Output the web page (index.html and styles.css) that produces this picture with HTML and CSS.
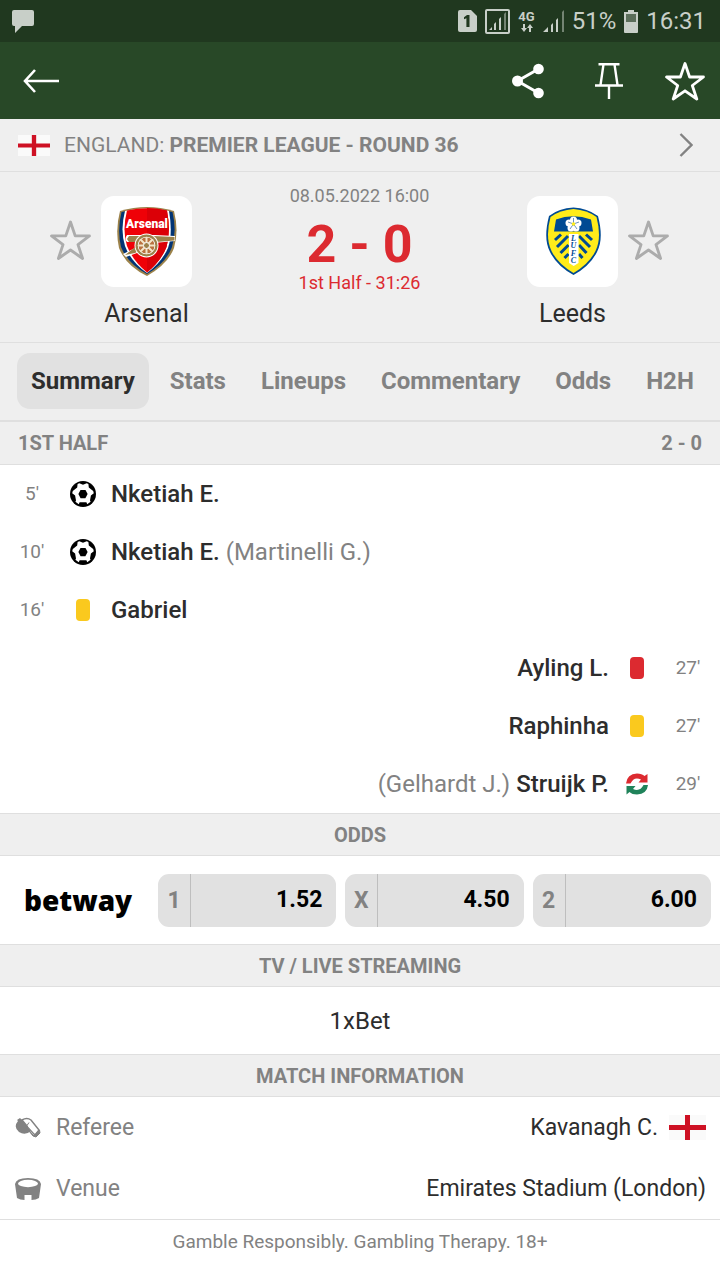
FILE: index.html
```html
<!DOCTYPE html>
<html lang="en">
<head>
  <meta charset="UTF-8">
  <meta name="viewport" content="width=device-width, initial-scale=1.0">
  <title>Arsenal - Leeds</title>
  <link rel="stylesheet" href="styles.css">
</head>
<body>
  <svg class="defs" aria-hidden="true">
    <symbol id="star" viewBox="0 0 40 40">
      <path d="M20 2.5 L24.6 16 H38.5 L27.3 24.5 L31.8 38 L20 29.8 L8.2 38 L12.7 24.5 L1.5 16 H15.4 Z" fill="none" stroke="currentColor" stroke-width="2.8" stroke-linejoin="round"/>
    </symbol>
    <symbol id="england" viewBox="0 0 37 25" preserveAspectRatio="none">
      <path d="M0 0H37V25H0Z" fill="#fafafa"/>
      <path d="M16 0H21V25H16ZM0 10H37V15H0Z" fill="#ce1124"/>
    </symbol>
    <symbol id="ball" viewBox="0 0 26 26">
      <circle cx="13" cy="13" r="13" fill="#000"/>
      <path d="M13 3.8 L16.7 2.3 L18.4 3 L18.8 6.6 L23.2 9.9 L23.8 12.2 L20.9 14.6 L20 19.4 L20.6 20.8 L17.2 23.2 L16.4 21.2 H9.6 L8.8 23.2 L5.4 20.8 L6 19.4 L5.1 14.6 L2.2 12.2 L2.8 9.9 L7.2 6.6 L7.6 3 L9.3 2.3 Z" fill="#fff"/>
      <path d="M10.5 9 H15.5 L17.6 13 L15.4 17.2 H10.6 L8.4 13 Z" fill="#000"/>
    </symbol>
  </svg>

  <div class="status-bar">
    <svg class="status-chat" viewBox="0 0 22 23"><path d="M2 0H20Q22 0 22 2V14Q22 16 20 16H10L3 23V16H2Q0 16 0 14V2Q0 0 2 0Z" fill="currentColor"/></svg>
    <div class="status-right">
      <svg width="19" height="22" viewBox="0 0 19 22"><path d="M2 0H13L19 6V20Q19 22 17 22H2Q0 22 0 20V2Q0 0 2 0Z" fill="currentColor"/><path d="M6 7.2L9 5H11.5V17H8.4V8.3L6 9.2Z" fill="#20381f"/></svg>
      <svg width="25" height="25" viewBox="0 0 25 25"><rect x="1" y="1" width="23" height="23" rx="1" fill="none" stroke="currentColor" stroke-width="2"/><path d="M4 21L7 18V21ZM9 15L11 13V21H9ZM14 10L16 8V21H14Z" fill="currentColor"/><path d="M19 5L21 3V21H19Z" fill="currentColor" opacity=".5"/></svg>
      <span class="network">
        <span>4G</span>
        <svg width="12" height="9" viewBox="0 0 12 9"><path d="M2 0H4V4H6L3 8L0 4H2ZM8 8V4H6L9 0L12 4H10V8Z" fill="currentColor"/></svg>
      </span>
      <svg width="21" height="22" viewBox="0 0 21 22"><path d="M0 22L5 17V22ZM8 15L10 13V22H8ZM13 10L15 8V22H13Z" fill="currentColor"/><path d="M19 2L21 0V22H19Z" fill="currentColor" opacity=".5"/></svg>
      <span class="status-text">51%</span>
      <svg width="14" height="23" viewBox="0 0 14 23"><path d="M4 0H10V2H14V13H0V2H4Z" fill="currentColor"/><path d="M2 4H12V12H2Z" fill="#5b6e5a"/><path d="M0 12H14V22Q14 23 13 23H1Q0 23 0 22Z" fill="currentColor"/></svg>
      <span class="status-text">16:31</span>
    </div>
  </div>

  <header class="toolbar">
    <button class="icon-button" aria-label="Back">
      <svg width="38" height="26" viewBox="0 0 38 26"><path d="M13 2L3 13L13 24M3 13H37" fill="none" stroke="#fff" stroke-width="2.6"/></svg>
    </button>
    <div class="toolbar-actions">
      <button class="icon-button" aria-label="Share">
        <svg width="32" height="36" viewBox="0 0 32 36"><path d="M26.500 6L5.500 18L26.500 30" fill="none" stroke="#fff" stroke-width="3"/><circle cx="26.500" cy="6" r="5.300" fill="#fff"/><circle cx="5.500" cy="18" r="5.500" fill="#fff"/><circle cx="26.500" cy="30" r="5.300" fill="#fff"/></svg>
      </button>
      <button class="icon-button" aria-label="Pin">
        <svg width="28" height="36" viewBox="0 0 28 36"><path d="M3.500 1.300H24.500M8.500 1.300L5.500 22M19.500 1.300L22.500 22M0 22.500H28M14 22.500V36" fill="none" stroke="#fff" stroke-width="2.400"/></svg>
      </button>
      <button class="icon-button" aria-label="Add to favourites">
        <svg width="40" height="40"><use href="#star"/></svg>
      </button>
    </div>
  </header>

  <a class="league" href="#">
    <svg class="flag-small"><use href="#england"/></svg>
    <span class="league-name">ENGLAND: <b>PREMIER LEAGUE - ROUND 36</b></span>
    <svg width="14" height="24" viewBox="0 0 14 24"><path d="M1.500 1L12.500 12L1.500 23" fill="none" stroke="#828282" stroke-width="2.400"/></svg>
  </a>

  <section class="match">
    <button class="favourite" aria-label="Follow Arsenal"><svg width="41" height="42"><use href="#star"/></svg></button>
    <div class="team">
      <svg class="crest" viewBox="0 0 91 91">
        <path d="M19 15Q46 7 73 15Q78 35 73 52Q67 68 46 80Q25 70 18 52Q14 34 19 15Z" fill="#9c824a"/>
        <path d="M20.500 16Q46 9.500 71.500 16Q76 35 71 51Q65 67 46 78Q27 68 20 51Q16 34 20.500 16Z" fill="#023474"/>
        <path d="M24 15Q46 9.500 68 15Q72 37 67 52Q61 66 46 77Q30 66 24 50Q19 34 24 15Z" fill="#fff"/>
        <path d="M26 14.500Q46 10 66 14.500Q70 36 65.500 51Q60 65 46 76.500Q32 65 26 50Q21 34 26 14.500Z" fill="#ef0107"/>
        <path d="M46 12Q57 12 66 14.500Q70 36 65.500 51Q60 65 46 76.500Z" fill="#db0007"/>
        <path d="M26 39Q23 43 26 46L38 46L34 52L22 58L25 61L36 57L53 47L74 45V40L54 39L28 39Z" fill="#fff"/>
        <path d="M28 40H53L73.500 41V44.500L55 46H28L26 43ZM24 59L37 49L43 52L34 57Z" fill="#9c824a"/>
        <circle cx="45.500" cy="49.500" r="12" fill="#fff"/>
        <circle cx="45.500" cy="49.500" r="11" fill="#9c824a"/>
        <circle cx="45.500" cy="49.500" r="8.800" fill="#fff"/>
        <circle cx="45.500" cy="49.500" r="8" fill="#b9713f"/>
        <path d="M45.500 41V58M37 49.500H54M39.500 43.500L51.500 55.500M51.500 43.500L39.500 55.500" stroke="#f2e7c8" stroke-width="2"/>
        <circle cx="45.500" cy="49.500" r="3" fill="#9c824a" stroke="#fff"/>
        <text class="crest-name" x="46" y="32" text-anchor="middle">Arsenal</text>
      </svg>
      <span class="team-name">Arsenal</span>
    </div>
    <div class="result">
      <span class="date">08.05.2022 16:00</span>
      <strong class="score">2 - 0</strong>
      <span class="stage">1st Half - 31:26</span>
    </div>
    <div class="team">
      <svg class="crest" viewBox="0 0 91 91">
        <path d="M46.500 11.500Q60 12 71 20Q77 43 70 56Q63 70 46.500 79Q30 70 23 56Q16 43 22 20Q32 12 46.500 11.500Z" fill="#004a93"/>
        <path d="M46.500 13Q60 14 69.500 21Q75 42 68.500 55Q62 68 46.500 77Q31 68 24.500 55Q18 42 23.500 21Q33 14 46.500 13Z" fill="#ffec1a"/>
        <path d="M29 23.500Q46 17 64 23.500L66 35.500H27Z" fill="#004a93"/>
        <path d="M34 38.500L28 44M41 40L30 51M41.500 49L33.500 57M41.500 58L37.500 62M59 38.500L65 44M52 40L63 51M52 49L59.500 57M52 58L55.500 62" fill="none" stroke="#004a93" stroke-width="3"/>
        <path d="M42 38H51.500V67L46.700 70L42 67Z" fill="#fff"/>
        <g fill="#fff"><circle cx="46.500" cy="24" r="3.500"/><circle cx="51" cy="27" r="3.500"/><circle cx="49" cy="32" r="3.500"/><circle cx="44" cy="32" r="3.500"/><circle cx="42" cy="27" r="3.500"/></g>
        <path d="M46.500 22V28L52 26M46.500 28L50 33M46.500 28L43 33M46.500 28L41 26" fill="none" stroke="#6b94bd"/>
        <circle cx="46.500" cy="28" r="1.800" fill="#ffec1a"/>
        <text class="crest-letters" text-anchor="middle"><tspan x="46.500" y="45">L</tspan><tspan x="46.500" y="52">U</tspan><tspan x="46.500" y="60">F</tspan><tspan x="46.500" y="67">C</tspan></text>
      </svg>
      <span class="team-name">Leeds</span>
    </div>
    <button class="favourite" aria-label="Follow Leeds"><svg width="41" height="42"><use href="#star"/></svg></button>
  </section>

  <nav class="tabs">
    <a class="tab active" href="#">Summary</a>
    <a class="tab" href="#">Stats</a>
    <a class="tab" href="#">Lineups</a>
    <a class="tab" href="#">Commentary</a>
    <a class="tab" href="#">Odds</a>
    <a class="tab" href="#">H2H</a>
  </nav>

  <h2 class="section-title half"><span>1ST HALF</span><span>2 - 0</span></h2>
  <ul class="events">
    <li class="event">
      <span class="minute">5'</span>
      <svg class="event-icon"><use href="#ball"/></svg>
      <span class="player">Nketiah E.</span>
    </li>
    <li class="event">
      <span class="minute">10'</span>
      <svg class="event-icon"><use href="#ball"/></svg>
      <span class="player">Nketiah E. <span class="other">(Martinelli G.)</span></span>
    </li>
    <li class="event">
      <span class="minute">16'</span>
      <span class="event-icon"><i class="card yellow"></i></span>
      <span class="player">Gabriel</span>
    </li>
    <li class="event away">
      <span class="minute">27'</span>
      <span class="event-icon"><i class="card red"></i></span>
      <span class="player">Ayling L.</span>
    </li>
    <li class="event away">
      <span class="minute">27'</span>
      <span class="event-icon"><i class="card yellow"></i></span>
      <span class="player">Raphinha</span>
    </li>
    <li class="event away">
      <span class="minute">29'</span>
      <svg class="event-icon" viewBox="0 0 26 26">
        <path d="M2 12.500Q3 3 13 2.500Q18 2.500 20.500 5L23.500 3V11.500H14.500L17 8.500Q10 5 6.500 12.500Z" fill="#dc2a30"/>
        <path d="M24 14Q23 23 13 23.500Q8 23.500 5.500 21L2.500 23.500V15H11.500L9 18Q16 21 19.500 14Z" fill="#20835a"/>
      </svg>
      <span class="player"><span class="other">(Gelhardt J.)</span> Struijk P.</span>
    </li>
  </ul>

  <h2 class="section-title">ODDS</h2>
  <div class="odds">
    <a class="bookmaker" href="#">betway</a>
    <button class="odd"><span class="odd-label">1</span><span class="odd-value">1.52</span></button>
    <button class="odd"><span class="odd-label">X</span><span class="odd-value">4.50</span></button>
    <button class="odd"><span class="odd-label">2</span><span class="odd-value">6.00</span></button>
  </div>

  <h2 class="section-title">TV / LIVE STREAMING</h2>
  <a class="stream" href="#">1xBet</a>

  <h2 class="section-title">MATCH INFORMATION</h2>
  <dl class="info">
    <div class="info-row">
      <svg width="26" height="22" viewBox="0 0 26 22">
        <path d="M3 4L2 3L5 1L7 3Q12 2 15 6L12 9L16 14Q10 19 4 15Q-2 10 3 4Z" fill="#828282"/>
        <path d="M7 3Q12 0 16 3L24 13L20 18L12 9Z" fill="#fff" stroke="#828282" stroke-width="1.500"/>
        <path d="M12 8.500L14 5.500M10 9L19 19L24.500 13L25 16L21 20L18 19Z" fill="#828282" stroke="#828282"/>
        <path d="M15.500 6.500L22 13.500L19.500 16.500L13 9.500Z" fill="#fff"/>
      </svg>
      <dt>Referee</dt>
      <dd>Kavanagh C. <svg class="flag"><use href="#england"/></svg></dd>
    </div>
    <div class="info-row">
      <svg width="26" height="24" viewBox="0 0 26 24">
        <path d="M0 7Q1 1 13 1Q25 1 26 7L24 21Q21 23 16.500 23V18H9.500V23Q5 23 2 21Z" fill="#828282"/>
        <ellipse cx="13" cy="6.500" rx="10" ry="3.700" fill="#fff"/>
      </svg>
      <dt>Venue</dt>
      <dd>Emirates Stadium (London)</dd>
    </div>
  </dl>

  <footer>Gamble Responsibly. Gambling Therapy. 18+</footer>
</body>
</html>
```

FILE: styles.css
```css
* {
  box-sizing: border-box;
}

body {
  margin: 0;
  font-family: Roboto, 'Liberation Sans', Arial, sans-serif;
  font-size: 24px;
  line-height: 28px;
  color: #2d2d2d;
  background: #ffffff;
}

a {
  color: inherit;
  text-decoration: none;
}

button {
  font: inherit;
  color: inherit;
  background: none;
  border: none;
  padding: 0;
  cursor: pointer;
}

svg {
  display: block;
  flex-shrink: 0;
}

.defs {
  display: none;
}

.status-bar {
  display: flex;
  justify-content: space-between;
  align-items: center;
  height: 42px;
  padding: 0 14px 0 12px;
  background: #20381f;
  color: #c8cfc8;
}

.status-chat {
  width: 22px;
  height: 23px;
}

.status-right {
  display: flex;
  align-items: center;
  gap: 8px;
}

.status-text {
  font-size: 24px;
}

.network {
  display: flex;
  flex-direction: column;
  align-items: center;
  gap: 1px;
  font-size: 13px;
  line-height: 13px;
  font-weight: 700;
}

.toolbar {
  display: flex;
  justify-content: space-between;
  align-items: center;
  height: 77px;
  padding: 0 15px 0 22px;
  background: #284827;
}

.toolbar-actions {
  display: flex;
  align-items: center;
  gap: 51px;
}

.toolbar-actions .icon-button:last-child {
  margin-left: -9px;
}

.icon-button {
  color: #ffffff;
}

.league {
  display: flex;
  align-items: center;
  gap: 14px;
  height: 53px;
  padding: 0 27px 0 18px;
  background: #efefef;
  border-bottom: 1px solid #dfdfdf;
  color: #828282;
  font-size: 21px;
}

.league-name {
  flex: 1;
}

.flag-small {
  width: 32px;
  height: 21px;
}

.flag {
  width: 37px;
  height: 25px;
}

.match {
  display: grid;
  grid-template-columns: 41px 91px 1fr 91px 41px;
  column-gap: 10px;
  align-items: start;
  padding: 12px 51px 14px 50px;
  background: #efefef;
  border-bottom: 1px solid #dfdfdf;
}

.favourite {
  margin-top: 35px;
  color: #acacac;
}

.team {
  display: flex;
  flex-direction: column;
  align-items: center;
  gap: 12px;
  padding-top: 12px;
}

.crest {
  width: 91px;
  height: 91px;
  background: #ffffff;
  border-radius: 13px;
}

.crest-name {
  font-size: 12px;
  font-weight: 900;
  fill: #ffffff;
}

.crest-letters {
  font-family: 'Liberation Serif', serif;
  font-size: 8px;
  font-style: italic;
  font-weight: 700;
  fill: #004a93;
}

.team-name {
  font-size: 25px;
  line-height: 29px;
}

.result {
  display: flex;
  flex-direction: column;
  align-items: center;
  color: #dc2a30;
  font-size: 18px;
  line-height: 24px;
}

.date {
  color: #828282;
}

.score {
  font-size: 52px;
  line-height: 52px;
  margin-top: 11px;
}

.tabs {
  display: flex;
  align-items: center;
  gap: 7px;
  height: 79px;
  padding: 0 13px 2px 17px;
  background: #efefef;
  border-bottom: 2px solid #dfdfdf;
  overflow: hidden;
}

.tab {
  padding: 14px;
  border-radius: 13px;
  color: #828282;
  font-size: 24px;
  font-weight: 700;
}

.tab.active {
  background: #e1e1e1;
  color: #2d2d2d;
}

.section-title {
  margin: 0;
  padding: 7px 18px 6px;
  background: #efefef;
  border-top: 1px solid #dfdfdf;
  border-bottom: 1px solid #dfdfdf;
  color: #828282;
  font-size: 20px;
  font-weight: 700;
  text-align: center;
}

.half {
  display: flex;
  justify-content: space-between;
  padding-bottom: 7px;
  border-top: none;
}

.events {
  list-style: none;
  margin: 0;
  padding: 0;
}

.event {
  display: flex;
  align-items: center;
  height: 58px;
  padding: 0 8px;
}

.away {
  flex-direction: row-reverse;
}

.minute {
  width: 48px;
  color: #828282;
  font-size: 19px;
  text-align: center;
}

.event-icon {
  display: flex;
  justify-content: center;
  width: 26px;
  height: 26px;
  margin: 0 15px 0 14px;
}

.away .event-icon {
  margin: 0 14px 0 15px;
}

.card {
  width: 14px;
  height: 22px;
  margin-top: 2px;
  border-radius: 4px;
}

.yellow {
  background: #fac91e;
}

.red {
  background: #dc2a30;
}

.player {
  font-weight: 500;
}

.other {
  color: #828282;
  font-weight: 400;
}

.odds {
  display: grid;
  grid-template-columns: 140px 1fr 1fr 1fr;
  align-items: center;
  gap: 9px;
  height: 88px;
  padding-right: 9px;
  padding-left: 9px;
}

.bookmaker {
  padding-left: 15px;
  color: #000000;
  font-family: 'Open Sans', sans-serif;
  font-size: 28px;
  font-weight: 800;
}

.odd {
  display: flex;
  align-items: center;
  height: 53px;
  background: #e1e1e1;
  border-radius: 11px;
  font-size: 23px;
  font-weight: 700;
}

.odd-label {
  width: 33px;
  line-height: 53px;
  border-right: 1px solid #bebebe;
  color: #828282;
}

.odd-value {
  flex: 1;
  padding-right: 14px;
  color: #000000;
  text-align: right;
}

.stream {
  display: block;
  padding: 20px 0 19px;
  text-align: center;
}

.info {
  margin: 0;
  border-bottom: 1px solid #dfdfdf;
  font-size: 23px;
}

.info-row {
  display: flex;
  align-items: center;
  gap: 15px;
  height: 61px;
  padding: 0 14px 0 15px;
}

.info dt {
  color: #828282;
}

.info dd {
  display: flex;
  align-items: center;
  gap: 11px;
  margin: 0 0 0 auto;
}

footer {
  padding: 8px 0 24px;
  color: #828282;
  font-size: 19px;
  text-align: center;
}
```
